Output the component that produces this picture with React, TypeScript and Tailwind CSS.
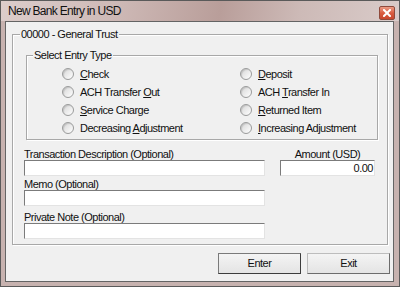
import type { ReactNode } from 'react'

type EntryOption = {
  label: string
  key: string
}

const leftOptions: EntryOption[] = [
  { label: 'Check', key: 'C' },
  { label: 'ACH Transfer Out', key: 'O' },
  { label: 'Service Charge', key: 'S' },
  { label: 'Decreasing Adjustment', key: 'A' },
]

const rightOptions: EntryOption[] = [
  { label: 'Deposit', key: 'D' },
  { label: 'ACH Transfer In', key: 'T' },
  { label: 'Returned Item', key: 'R' },
  { label: 'Increasing Adjustment', key: 'I' },
]

function Mnemonic({ label, accessKey }: { label: string; accessKey: string }) {
  const index = label.indexOf(accessKey)
  if (index < 0) {
    return <>{label}</>
  }

  return (
    <>
      {label.slice(0, index)}
      <span className="underline underline-offset-[1px]">{label[index]}</span>
      {label.slice(index + 1)}
    </>
  )
}

function Radio({ option }: { option: EntryOption }) {
  return (
    <label className="flex h-[18px] items-center gap-[6px]">
      <span className="h-[12px] w-[12px] rounded-full border border-[#9a9b9b] bg-gradient-to-br from-[#d6d6d6] to-white shadow-[inset_1px_1px_1px_rgba(0,0,0,0.12)]" />
      <span className="leading-[12px]">
        <Mnemonic label={option.label} accessKey={option.key} />
      </span>
    </label>
  )
}

function GroupBox({ title, className, titleOffset, children }: { title: string; className: string; titleOffset: string; children: ReactNode }) {
  return (
    <div className={`relative border border-[#a8a8a8] shadow-[1px_1px_0_#ffffff,inset_1px_1px_0_#ffffff] ${className}`}>
      <span className={`absolute top-[-7px] bg-[#f0f0f0] px-[1px] leading-[12px] ${titleOffset}`}>{title}</span>
      {children}
    </div>
  )
}

function TextField({ className, value }: { className: string; value?: string }) {
  return (
    <div
      className={`h-[16px] border border-t-[#7b7b7b] border-l-[#7b7b7b] border-b-[#e3e3e3] border-r-[#e3e3e3] bg-white pr-[1px] text-right leading-[14px] ${className}`}
    >
      {value}
    </div>
  )
}

function DialogButton({ label, isDefault }: { label: string; isDefault?: boolean }) {
  return (
    <button
      type="button"
      className={`h-[21px] w-[83px] border bg-gradient-to-b from-[#f4f4f4] to-[#e4e4e4] leading-[19px] ${
        isDefault
          ? 'border-[#7a7a7a] border-r-[#3c3c3c] border-b-[#3c3c3c]'
          : 'border-[#bdbdbd] border-r-[#6c6c6c] border-b-[#6c6c6c]'
      }`}
    >
      {label}
    </button>
  )
}

export default function App() {
  return (
    <div
      className="flex h-[287px] w-[400px] flex-col border border-[#5a5a5a] bg-[#c7b2af] pb-[4px] pl-[4px] pr-[5px] text-[11px] tracking-[-0.5px] text-[#111]"
      style={{ fontFamily: '"Liberation Sans", Arial, sans-serif' }}
    >
      <div className="-ml-[4px] -mr-[5px] flex h-[20px] items-center bg-[linear-gradient(100deg,#dccdcb_0%,#cdb8b5_30%,#b99e9a_55%,#cdbab7_75%,#d9cbc9_100%)] pl-[7px] pr-[4px]">
        <span className="flex-1 text-[12px] leading-[14px] tracking-[-0.7px]">New Bank Entry in USD</span>
        <span className="mt-[4px] flex h-[14px] w-[16px] items-center justify-center rounded-[2px] border border-[#8f4a3c] bg-gradient-to-b from-[#eb9c86] via-[#d95c40] to-[#c8472d]">
          <svg width="8" height="8" viewBox="0 0 8 8">
            <path d="M1 1 L7 7 M7 1 L1 7" stroke="#ffffff" strokeWidth="2" strokeLinecap="square" />
          </svg>
        </span>
      </div>

      <div className="flex-1 border border-[#646464] bg-[#f0f0f0] pl-[6px] pt-[12px]">
        <GroupBox title="00000 - General Trust" className="h-[211px] w-[376px]" titleOffset="left-[7px]">
          <div className="pl-[13px] pt-[20px]">
            <GroupBox title="Select Entry Type" className="h-[85px] w-[352px]" titleOffset="left-[6px]">
              <div className="grid grid-cols-[178px_1fr] pl-[35px] pt-[9px]">
                <div className="flex flex-col">
                  {leftOptions.map((option) => (
                    <Radio key={option.label} option={option} />
                  ))}
                </div>
                <div className="flex flex-col">
                  {rightOptions.map((option) => (
                    <Radio key={option.label} option={option} />
                  ))}
                </div>
              </div>
            </GroupBox>
          </div>

          <div className="flex pl-[11px]">
            <div className="flex w-[241px] flex-col">
              <span className="mt-[8px] h-[12px] leading-[12px]">Transaction Description (Optional)</span>
              <TextField className="w-[241px]" />
              <span className="mt-[2px] h-[12px] leading-[12px]">Memo (Optional)</span>
              <TextField className="w-[241px]" />
              <span className="mt-[5px] h-[12px] leading-[12px]">Private Note (Optional)</span>
              <TextField className="w-[241px]" />
            </div>
            <div className="ml-[15px] flex w-[95px] flex-col">
              <span className="mt-[8px] h-[12px] text-center leading-[12px]">Amount (USD)</span>
              <TextField className="w-[95px]" value="0.00" />
            </div>
          </div>
        </GroupBox>

        <div className="mt-[8px] flex justify-end gap-[6px] pr-[3px]">
          <DialogButton label="Enter" isDefault />
          <DialogButton label="Exit" />
        </div>
      </div>
    </div>
  )
}
